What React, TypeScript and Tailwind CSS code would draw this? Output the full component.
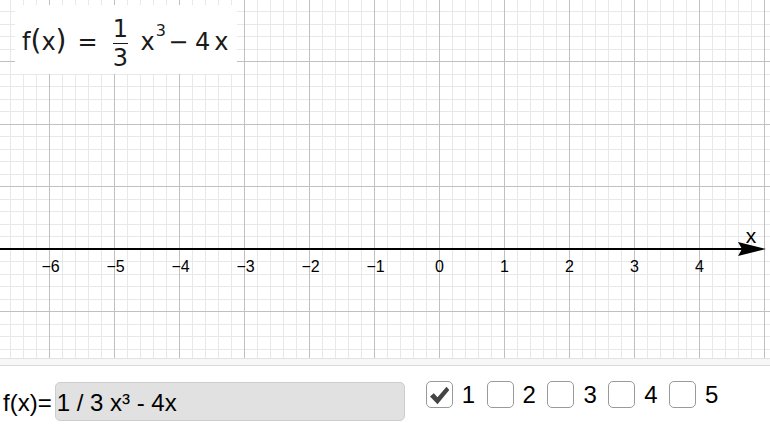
import React from "react"

// Graph window geometry (pixels)
const W = 770
const H = 358
const ORIGIN_X = 439.5
const AXIS_Y = 249
const STEP_X = 13 // minor step, 5 per unit
const STEP_Y = 12.5

const MINOR = "#e8e8e8"
const MAJOR = "#c0c0c0"

const xs: { x: number; major: boolean }[] = []
for (let i = -34; i <= 26; i++) {
  const x = ORIGIN_X + i * STEP_X
  if (x > 0 && x < W) xs.push({ x, major: i % 5 === 0 })
}
const ys: { y: number; major: boolean }[] = []
for (let j = -20; j <= 9; j++) {
  const y = AXIS_Y + j * STEP_Y
  if (y > 0 && y < H && j !== 0) ys.push({ y, major: j % 5 === 0 })
}
const LABELS = [-6, -5, -4, -3, -2, -1, 0, 1, 2, 3, 4]

function Grid() {
  return (
    <svg width={W} height={H} className="block" shapeRendering="crispEdges">
      {xs.filter((l) => !l.major).map((l) => (
        <line key={"vx" + l.x} x1={l.x} x2={l.x} y1={0} y2={H} stroke={MINOR} strokeWidth={1} />
      ))}
      {ys.filter((l) => !l.major).map((l) => (
        <line key={"hy" + l.y} x1={0} x2={W} y1={l.y} y2={l.y} stroke={MINOR} strokeWidth={1} />
      ))}
      {xs.filter((l) => l.major).map((l) => (
        <line key={"VX" + l.x} x1={l.x} x2={l.x} y1={0} y2={H} stroke={MAJOR} strokeWidth={1} />
      ))}
      {ys.filter((l) => l.major).map((l) => (
        <line key={"HY" + l.y} x1={0} x2={W} y1={l.y} y2={l.y} stroke={MAJOR} strokeWidth={1} />
      ))}
      {/* x axis */}
      <line x1={0} x2={742} y1={AXIS_Y} y2={AXIS_Y} stroke="#000" strokeWidth={2.2} shapeRendering="auto" />
      <path d="M738 242 L766 249 L738 256 L742 249 Z" fill="#000" shapeRendering="auto" />
      <text x={751} y={243} textAnchor="middle" fontFamily="'Liberation Sans', Arial, sans-serif" fontSize={21} fill="#000">
        x
      </text>
      {LABELS.map((n) => (
        <text
          key={n}
          x={ORIGIN_X + n * 65 + (n < 0 ? 1 : 0)}
          y={272}
          textAnchor="middle"
          fontFamily="'Liberation Sans', Arial, sans-serif"
          fontSize={16}
          fill="#000"
        >
          {n < 0 ? "\u2212" + -n : n}
        </text>
      ))}
    </svg>
  )
}

function Formula() {
  return (
    <div className="absolute left-[15px] top-[5px] h-[69px] w-[222px] whitespace-nowrap bg-white pl-[7px] pt-[12px] font-['DejaVu_Sans',sans-serif] text-[24px] leading-[24px] text-[#1a1a1a]">
      <span>f</span>
      <span className="text-[28px]">(</span>
      <span>x</span>
      <span className="text-[28px]">)</span>
      <span className="ml-[11px]">=</span>
      <span className="ml-[15px] inline-flex flex-col items-center align-[13px]">
        <span className="leading-[24px]">1</span>
        <span className="mt-[1.5px] h-[1.5px] w-[15px] bg-[#1a1a1a]" />
        <span className="mt-[2px] leading-[24px]">3</span>
      </span>
      <span className="ml-[12.5px]">x</span>
      <span className="ml-[1px] align-[14px] text-[16px]">3</span>
      <span className="ml-[2.5px]">−</span>
      <span className="ml-[6.5px]">4</span>
      <span className="ml-[4px]">x</span>
    </div>
  )
}

function CheckMark() {
  return (
    <svg width="24" height="24" viewBox="0 0 24 24">
      <path d="M3 13.5 L6.8 10.2 L10.5 14.2 L19.5 3.8 L22.3 7 L10.5 21.2 Z" fill="#444" />
    </svg>
  )
}

function Box({ checked, label }: { checked?: boolean; label: string }) {
  return (
    <div className="flex items-center">
      <span className="flex h-[27px] w-[27px] items-center justify-center rounded-[5px] border-[1.5px] border-[#9a9a9a] bg-white">
        {checked && <CheckMark />}
      </span>
      <span className="ml-[9px] text-[24px] leading-[27px]">{label}</span>
    </div>
  )
}

export default function App() {
  return (
    <div className="h-[445px] w-[770px] overflow-hidden bg-white font-['Liberation_Sans',Arial,sans-serif] text-black">
      <div className="relative h-[358px]">
        <Grid />
        <Formula />
      </div>
      <div className="h-[8px] border-y border-t-[#e2e2e2] border-b-[#d9d9d9] bg-[#f7f7f7]" />
      <div className="flex items-start pt-[15px]">
        <div className="mt-[1px] flex">
          <span className="h-[39px] pl-[3px] pr-[3px] pt-[4px] text-[24px] leading-[34px]">f(x)=</span>
          <div className="h-[39px] w-[350px] rounded-[5px] border border-[#cdcdcd] bg-[#e1e1e1] pl-[1px] pt-[3px] text-[24px] leading-[34px]">
            1 / 3 x³ - 4x
          </div>
        </div>
        <div className="ml-[21px] flex gap-[11.5px]">
          <Box checked label="1" />
          <Box label="2" />
          <Box label="3" />
          <Box label="4" />
          <Box label="5" />
        </div>
      </div>
    </div>
  )
}
